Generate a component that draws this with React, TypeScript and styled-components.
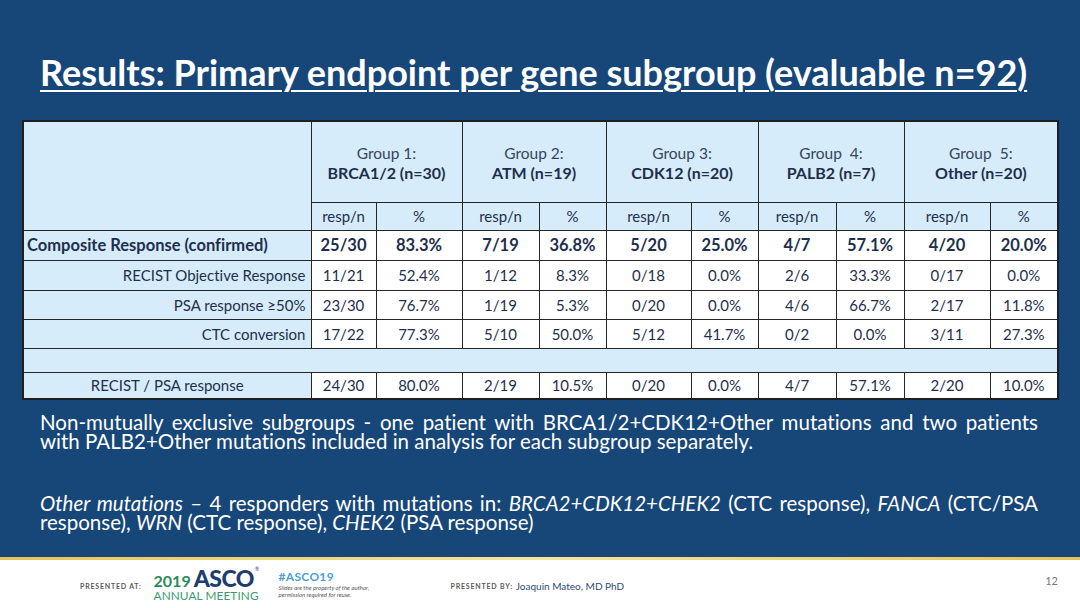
import React from 'react';
import styled, { createGlobalStyle } from 'styled-components';

const GlobalStyle = createGlobalStyle`
  html, body {
    margin: 0;
    padding: 0;
    background: #174679;
  }
  body {
    font-family: Lato, 'Open Sans', 'DejaVu Sans', sans-serif;
    font-variant-ligatures: no-common-ligatures;
  }
`;

const Slide = styled.div`
  width: 1080px;
  height: 608px;
  display: flex;
  flex-direction: column;
  background: #174679;
  overflow: hidden;
`;

const Content = styled.main`
  flex: 1;
  min-height: 0;
  display: flex;
  flex-direction: column;
  padding: 50px 23px 0 22px;
`;

const Title = styled.h1`
  margin: 0 0 0 18px;
  font-size: 36px;
  line-height: 44px;
  font-weight: 700;
  color: #ffffff;
  white-space: nowrap;
  text-decoration: underline;
  text-decoration-thickness: 2px;
  text-underline-offset: 4px;
`;

const Table = styled.table`
  margin-top: 26px;
  width: 1035px;
  table-layout: fixed;
  border-collapse: collapse;
  border: 2px solid #1f1f1f;
  font-size: 15px;
  color: #1e2f4d;
`;

const Row = styled.tr<{ $h: number }>`
  height: ${(p) => p.$h}px;
`;

const Cell = styled.td<{ $blue?: boolean; $align?: 'left' | 'right' | 'center'; $bold?: boolean }>`
  border: 1px solid #262626;
  background: ${(p) => (p.$blue ? '#d7ecfa' : '#ffffff')};
  text-align: ${(p) => p.$align || 'center'};
  font-weight: ${(p) => (p.$bold ? 700 : 400)};
  font-size: ${(p) => (p.$bold ? '16.5px' : '15px')};
  padding: ${(p) => (p.$align === 'left' ? '0 0 0 3px' : p.$align === 'right' ? '0 5px 0 0' : '0 2px')};
  vertical-align: middle;
  white-space: nowrap;
`;

const GroupHead = styled.div`
  display: flex;
  flex-direction: column;
  line-height: 20px;
  padding-top: 2px;
`;

const GroupLabel = styled.span`
  font-weight: 400;
  font-size: 15.5px;
  color: #34455f;
`;

const GroupName = styled.span`
  font-weight: 700;
  font-size: 16px;
`;

const Notes = styled.section`
  margin-top: 13px;
  padding: 0 19px 0 18px;
  color: #ffffff;
  font-size: 20.5px;
  line-height: 19px;
`;

const Para = styled.p`
  margin: 0 0 43px;

  &:last-child {
    margin-bottom: 0;
  }
`;

const Line = styled.span<{ $full?: boolean }>`
  display: block;
  white-space: nowrap;
  text-align: ${(p) => (p.$full ? 'justify' : 'left')};
  text-align-last: ${(p) => (p.$full ? 'justify' : 'left')};
`;

const GoldRule = styled.div`
  flex-shrink: 0;
  height: 3px;
  background: linear-gradient(90deg, #e6c455, #f6e49c 50%, #e6c455);
`;

const Footer = styled.footer`
  flex-shrink: 0;
  height: 48px;
  background: #ffffff;
  display: flex;
  align-items: center;
  padding: 0 22px 0 80px;
`;

const Caption = styled.span`
  font-size: 7px;
  font-weight: 700;
  letter-spacing: 0.8px;
  color: #5a5a5a;
  white-space: nowrap;
  margin-top: 4px;
`;

const Logo = styled.div`
  display: flex;
  flex-direction: column;
  width: 106px;
  margin-left: 12px;
`;

const LogoTop = styled.div`
  display: flex;
  align-items: baseline;
  line-height: 1;
`;

const LogoYear = styled.span`
  color: #2b8a5a;
  font-weight: 700;
  font-size: 16px;
`;

const LogoAsco = styled.span`
  color: #1d3d6f;
  font-weight: 900;
  font-size: 23px;
  margin-left: 3px;
  letter-spacing: -0.5px;
`;

const LogoReg = styled.span`
  align-self: flex-start;
  color: #1d3d6f;
  font-size: 5px;
  margin-left: 1px;
`;

const LogoSub = styled.div`
  color: #3b9a70;
  font-size: 11.8px;
  line-height: 12px;
  letter-spacing: 0.1px;
  white-space: nowrap;
`;

const Tag = styled.div`
  display: flex;
  flex-direction: column;
  width: 102px;
  margin-left: 19px;
`;

const TagTitle = styled.span`
  color: #4c9fd6;
  font-size: 12px;
  font-weight: 700;
  letter-spacing: 0.3px;
  line-height: 14px;
`;

const TagNote = styled.span`
  font-style: italic;
  font-size: 6px;
  line-height: 7px;
  color: #555555;
  white-space: nowrap;
`;

const ByCaption = styled(Caption)`
  margin-left: 70px;
`;

const Presenter = styled.span`
  margin-left: 3px;
  margin-top: 4px;
  font-size: 10px;
  color: #2b4a78;
  white-space: nowrap;
`;

const PageNum = styled.span`
  margin-left: auto;
  align-self: flex-start;
  margin-top: 14px;
  font-size: 11px;
  color: #7a7a7a;
`;

const groups = [
  { label: 'Group 1:', name: 'BRCA1/2 (n=30)' },
  { label: 'Group 2:', name: 'ATM (n=19)' },
  { label: 'Group 3:', name: 'CDK12 (n=20)' },
  { label: 'Group\u00a0 4:', name: 'PALB2 (n=7)' },
  { label: 'Group\u00a0 5:', name: 'Other (n=20)' },
];

const colWidths = [288, 65, 86, 77, 67, 85, 67, 78, 68, 86, 68];

type DataRow = {
  label: string;
  align: 'left' | 'right' | 'center';
  bold?: boolean;
  h: number;
  values: string[];
};

const rows: DataRow[] = [
  {
    label: 'Composite Response (confirmed)',
    align: 'left',
    bold: true,
    h: 30,
    values: ['25/30', '83.3%', '7/19', '36.8%', '5/20', '25.0%', '4/7', '57.1%', '4/20', '20.0%'],
  },
  {
    label: 'RECIST Objective Response',
    align: 'right',
    h: 30,
    values: ['11/21', '52.4%', '1/12', '8.3%', '0/18', '0.0%', '2/6', '33.3%', '0/17', '0.0%'],
  },
  {
    label: 'PSA response \u226550%',
    align: 'right',
    h: 29,
    values: ['23/30', '76.7%', '1/19', '5.3%', '0/20', '0.0%', '4/6', '66.7%', '2/17', '11.8%'],
  },
  {
    label: 'CTC conversion',
    align: 'right',
    h: 29,
    values: ['17/22', '77.3%', '5/10', '50.0%', '5/12', '41.7%', '0/2', '0.0%', '3/11', '27.3%'],
  },
];

const finalRow: DataRow = {
  label: 'RECIST / PSA response',
  align: 'center',
  h: 27,
  values: ['24/30', '80.0%', '2/19', '10.5%', '0/20', '0.0%', '4/7', '57.1%', '2/20', '10.0%'],
};

const renderRow = (r: DataRow) => (
  <Row $h={r.h} key={r.label}>
    <Cell $blue $align={r.align} $bold={r.bold}>
      {r.label}
    </Cell>
    {r.values.map((v, i) => (
      <Cell key={i} $bold={r.bold}>
        {v}
      </Cell>
    ))}
  </Row>
);

export default function App() {
  return (
    <>
      <GlobalStyle />
      <Slide>
        <Content>
          <Title>Results: Primary endpoint per gene subgroup (evaluable n=92)</Title>

          <Table>
            <colgroup>
              {colWidths.map((w, i) => (
                <col key={i} style={{ width: w }} />
              ))}
            </colgroup>
            <tbody>
              <Row $h={81}>
                <Cell $blue rowSpan={2} />
                {groups.map((g) => (
                  <Cell $blue colSpan={2} key={g.name}>
                    <GroupHead>
                      <GroupLabel>{g.label}</GroupLabel>
                      <GroupName>{g.name}</GroupName>
                    </GroupHead>
                  </Cell>
                ))}
              </Row>
              <Row $h={28}>
                {groups.map((g) => (
                  <React.Fragment key={g.name}>
                    <Cell $blue>resp/n</Cell>
                    <Cell $blue>%</Cell>
                  </React.Fragment>
                ))}
              </Row>
              {rows.map(renderRow)}
              <Row $h={24}>
                <Cell $blue colSpan={11} />
              </Row>
              {renderRow(finalRow)}
            </tbody>
          </Table>

          <Notes>
            <Para>
              <Line $full>
                Non-mutually exclusive subgroups - one patient with BRCA1/2+CDK12+Other mutations and two patients
              </Line>
              <Line>with PALB2+Other mutations included in analysis for each subgroup separately.</Line>
            </Para>
            <Para>
              <Line $full>
                <i>Other mutations</i> – 4 responders with mutations in: <i>BRCA2+CDK12+CHEK2</i> (CTC response),{' '}
                <i>FANCA</i> (CTC/PSA
              </Line>
              <Line>
                response), <i>WRN</i> (CTC response), <i>CHEK2</i> (PSA response)
              </Line>
            </Para>
          </Notes>
        </Content>

        <GoldRule />
        <Footer>
          <Caption>PRESENTED AT:</Caption>
          <Logo>
            <LogoTop>
              <LogoYear>2019</LogoYear>
              <LogoAsco>ASCO</LogoAsco>
              <LogoReg>®</LogoReg>
            </LogoTop>
            <LogoSub>ANNUAL MEETING</LogoSub>
          </Logo>
          <Tag>
            <TagTitle>#ASCO19</TagTitle>
            <TagNote>Slides are the property of the author,</TagNote>
            <TagNote>permission required for reuse.</TagNote>
          </Tag>
          <ByCaption>PRESENTED BY:</ByCaption>
          <Presenter>Joaquin Mateo, MD PhD</Presenter>
          <PageNum>12</PageNum>
        </Footer>
      </Slide>
    </>
  );
}
